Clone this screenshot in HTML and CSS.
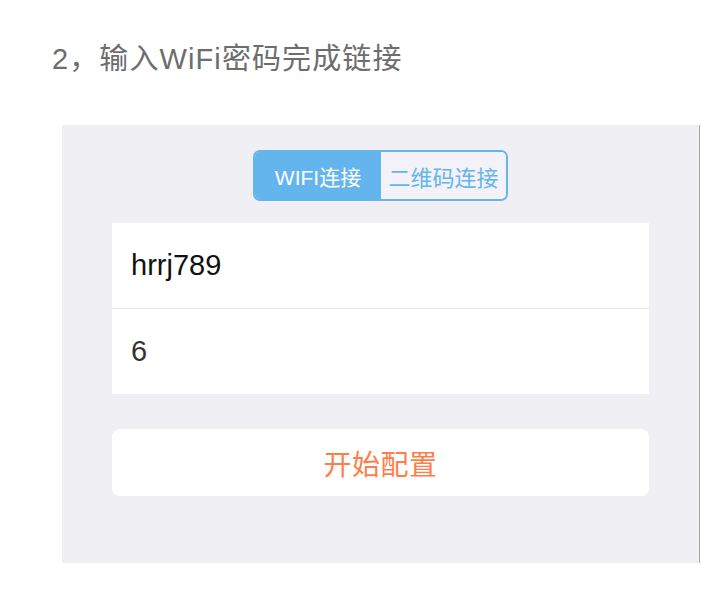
FILE: index.html
```html
<!DOCTYPE html>
<html lang="zh-CN">
<head>
<meta charset="utf-8">
<link rel="stylesheet" href="styles.css">
</head>
<body>
<h1 class="title">2，输入WiFi密码完成链接</h1>
<div class="panel">
  <div class="segment">
    <div class="seg seg-active">WIFI连接</div>
    <div class="seg seg-idle">二维码连接</div>
  </div>
  <div class="card">
    <div class="row row-ssid">hrrj789</div>
    <div class="row row-pass">6</div>
  </div>
  <div class="button">开始配置</div>
</div>
</body>
</html>
```
FILE: styles.css
```css
html, body {
  margin: 0;
  padding: 0;
  background: #ffffff;
}
body {
  font-family: "Liberation Sans", "Noto Sans CJK SC", sans-serif;
  width: 710px;
  height: 590px;
  overflow: hidden;
}
.title {
  margin: 39px 0 0 52px;
  font-size: 29px;
  line-height: 40px;
  font-weight: normal;
  color: #6d6d6d;
  letter-spacing: 1.1px;
}
.panel {
  margin: 46px 0 0 62px;
  width: 638px;
  height: 438px;
  background: #efeff4;
  border-right: 1px solid #a3a3a8;
  display: flex;
  flex-direction: column;
  align-items: center;
  padding-top: 25px;
  box-sizing: border-box;
}
.segment {
  display: flex;
  width: 255px;
  height: 51px;
  border: 2px solid #64b5ed;
  border-radius: 7px;
  box-sizing: border-box;
  overflow: hidden;
}
.seg {
  display: flex;
  align-items: center;
  justify-content: center;
  font-size: 21px;
}
.seg-active {
  width: 126px;
  background: #64b5ed;
  color: #ffffff;
}
.seg-idle {
  flex: 1;
  background: #f2f2f8;
  color: #64b5ed;
  font-size: 22px;
}
.card {
  margin-top: 22px;
  width: 537px;
  background: #ffffff;
  display: flex;
  flex-direction: column;
}
.row {
  height: 85px;
  display: flex;
  align-items: center;
  padding-left: 19px;
  font-size: 29px;
}
.row-ssid {
  color: #111111;
  border-bottom: 1px solid #e8e8ee;
}
.row-pass {
  color: #333333;
}
.button {
  margin-top: 35px;
  width: 537px;
  height: 67px;
  background: #ffffff;
  border-radius: 8px;
  display: flex;
  align-items: center;
  justify-content: center;
  color: #ff7d48;
  font-size: 28px;
  letter-spacing: 0.5px;
}
```
